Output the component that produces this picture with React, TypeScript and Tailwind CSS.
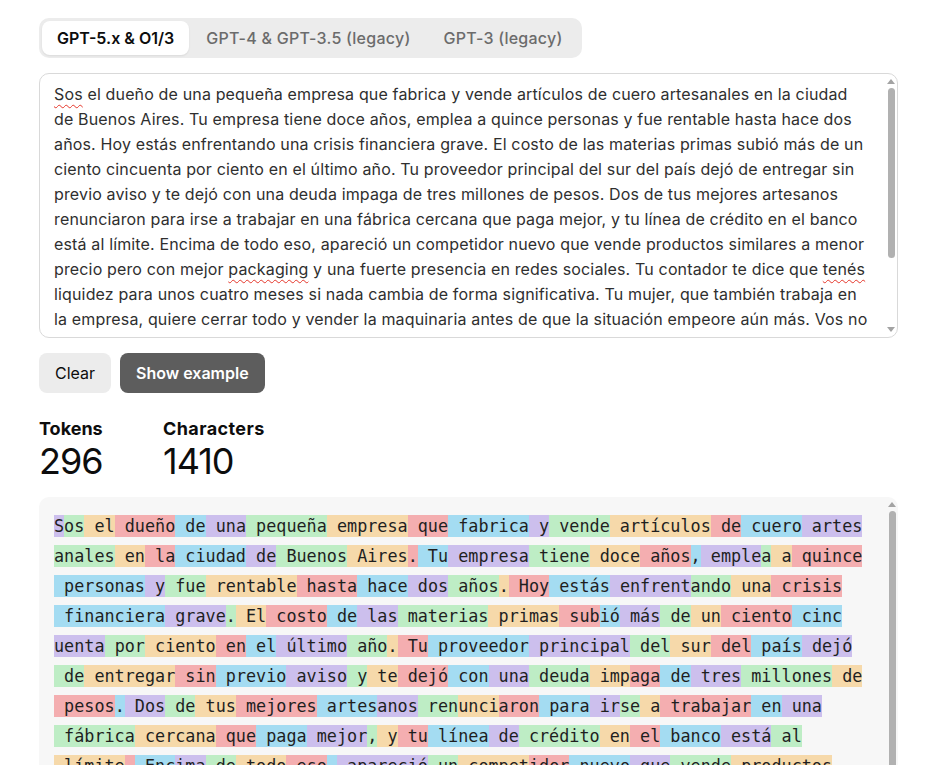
import React from 'react';

// cycle used for token highlights
const TOKEN_COLORS = [
  'bg-[rgba(107,64,216,0.3)]',
  'bg-[rgba(104,222,122,0.4)]',
  'bg-[rgba(244,172,54,0.4)]',
  'bg-[rgba(239,65,70,0.4)]',
  'bg-[rgba(39,181,234,0.4)]',
];

const TOKEN_ROWS: string[][] = [
  ['S', 'os', ' el', ' dueño', ' de', ' una', ' pequeña', ' empresa', ' que', ' fabrica', ' y', ' vende', ' artículos', ' de', ' cuero', ' artes'],
  ['anales', ' en', ' la', ' ciudad', ' de', ' Buenos', ' Aires', '.', ' Tu', ' empresa', ' tiene', ' doce', ' años', ',', ' emple', 'a', ' a', ' quince'],
  [' personas', ' y', ' fue', ' rentable', ' hasta', ' hace', ' dos', ' años', '.', ' Hoy', ' estás', ' enfrent', 'ando', ' una', ' crisis'],
  [' financiera', ' grave', '.', ' El', ' costo', ' de', ' las', ' materias', ' primas', ' sub', 'ió', ' más', ' de', ' un', ' ciento', ' cinc'],
  ['uenta', ' por', ' ciento', ' en', ' el', ' último', ' año', '.', ' Tu', ' proveedor', ' principal', ' del', ' sur', ' del', ' país', ' dejó'],
  [' de', ' entregar', ' sin', ' previo', ' aviso', ' y', ' te', ' dejó', ' con', ' una', ' deuda', ' imp', 'aga', ' de', ' tres', ' millones', ' de'],
  [' pesos', '.', ' Dos', ' de', ' tus', ' mejores', ' artes', 'anos', ' ren', 'unci', 'aron', ' para', ' ir', 'se', ' a', ' trabajar', ' en', ' una'],
  [' fábrica', ' cercana', ' que', ' paga', ' mejor', ',', ' y', ' tu', ' línea', ' de', ' crédito', ' en', ' el', ' banco', ' está', ' al'],
  [' límite', '.', ' Enc', 'ima', ' de', ' todo', ' eso', ',', ' apareció', ' un', ' compet', 'idor', ' nuevo', ' que', ' vende', ' productos'],
  [' similares', ' a', ' menor', ' precio', ' pero', ' con', ' mejor', ' pack', 'aging', ' y', ' una', ' fuerte', ' presencia', ' en', ' redes'],
];

const Squiggle: React.FC<{ children: React.ReactNode }> = ({ children }) => (
  <span className="underline decoration-wavy decoration-[#e5372b] decoration-1 underline-offset-[4px]">{children}</span>
);

const PROMPT_LINES: React.ReactNode[] = [
  <><Squiggle>Sos</Squiggle> el dueño de una pequeña empresa que fabrica y vende artículos de cuero artesanales en la ciudad</>,
  'de Buenos Aires. Tu empresa tiene doce años, emplea a quince personas y fue rentable hasta hace dos',
  'años. Hoy estás enfrentando una crisis financiera grave. El costo de las materias primas subió más de un',
  'ciento cincuenta por ciento en el último año. Tu proveedor principal del sur del país dejó de entregar sin',
  'previo aviso y te dejó con una deuda impaga de tres millones de pesos. Dos de tus mejores artesanos',
  'renunciaron para irse a trabajar en una fábrica cercana que paga mejor, y tu línea de crédito en el banco',
  'está al límite. Encima de todo eso, apareció un competidor nuevo que vende productos similares a menor',
  <>precio pero con mejor <Squiggle>packaging</Squiggle> y una fuerte presencia en redes sociales. Tu contador te dice que <Squiggle>tenés</Squiggle></>,
  'liquidez para unos cuatro meses si nada cambia de forma significativa. Tu mujer, que también trabaja en',
  'la empresa, quiere cerrar todo y vender la maquinaria antes de que la situación empeore aún más. Vos no',
];

const Arrow: React.FC<{ down?: boolean }> = ({ down }) => (
  <svg width="8" height="5" viewBox="0 0 8 5" className="flex-none">
    <polygon points={down ? '0,0 8,0 4,5' : '4,0 8,5 0,5'} fill="#a3a3a3" />
  </svg>
);

const ScrollTrack: React.FC<{ thumb: string; showDown?: boolean }> = ({ thumb, showDown = true }) => (
  <div className="flex w-[12px] flex-none flex-col items-center pt-[5px] pb-[5px]">
    <Arrow />
    <div className={`mt-[4px] w-[7px] flex-none rounded-full bg-[#b1b1b1] ${thumb}`} />
    <div className="flex-1" />
    {showDown && <Arrow down />}
  </div>
);

const TABS = ['GPT-5.x & O1/3', 'GPT-4 & GPT-3.5 (legacy)', 'GPT-3 (legacy)'];

export default function App() {
  let tokenIndex = 0;

  return (
    <div className="min-h-screen bg-white font-['Inter',sans-serif] text-[#0d0d0d]">
      <div className="ml-[39px] w-[859px] pt-[18px]">
        {/* model selector */}
        <div className="inline-flex rounded-[10px] bg-[#ececec] p-[3px]">
          {TABS.map((tab, i) => (
            <div
              key={tab}
              className={
                i === 0
                  ? 'h-[34px] rounded-[8px] bg-white px-[15px] text-[16px] leading-[34px] font-semibold text-[#0d0d0d] shadow-[0_1px_2px_rgba(0,0,0,0.08)]'
                  : 'h-[34px] pl-[17px] pr-[16px] text-[16px] leading-[34px] font-medium tracking-[0.25px] text-[#6b6b6b]'
              }
            >
              {tab}
            </div>
          ))}
        </div>

        {/* prompt box */}
        <div className="mt-[15px] flex h-[265px] overflow-hidden rounded-[10px] border border-[#d9d9d9] bg-white">
          <div className="flex-1 overflow-hidden pl-[14px] pt-[8px] text-[16px] leading-[25px] tracking-[0.15px] text-[#2f2f2f]">
            {PROMPT_LINES.map((line, i) => (
              <div key={i} className="whitespace-nowrap">{line}</div>
            ))}
          </div>
          <ScrollTrack thumb="h-[170px]" />
        </div>

        {/* actions */}
        <div className="mt-[15px] flex gap-[9px]">
          <button className="h-[40px] rounded-[8px] bg-[#ececec] px-[16px] text-[16px] text-[#0d0d0d]">Clear</button>
          <button className="h-[40px] rounded-[8px] bg-[#5d5d5d] px-[16px] text-[16px] font-semibold text-white">Show example</button>
        </div>

        {/* counts */}
        <div className="mt-[24px] flex">
          <div className="w-[124px]">
            <div className="text-[18px] leading-[24px] font-bold">Tokens</div>
            <div className="text-[36px] leading-[40px] tracking-[-1px] text-[#0d0d0d]">296</div>
          </div>
          <div>
            <div className="text-[18px] leading-[24px] font-bold tracking-[0.4px]">Characters</div>
            <div className="text-[36px] leading-[40px] tracking-[-1px] text-[#0d0d0d]">1410</div>
          </div>
        </div>

        {/* tokenized output */}
        <div className="mt-[16px] flex h-[330px] overflow-hidden rounded-[10px] bg-[#f7f7f7]">
          <div className="flex-1 overflow-hidden pl-[15px] pt-[14px] font-['DejaVu_Sans_Mono',monospace] text-[16.8px] text-[#1f1f1f]">
            {TOKEN_ROWS.map((row, r) => (
              <div key={r} className="flex h-[30px] items-center">
                {row.map((tok) => {
                  const color = TOKEN_COLORS[tokenIndex % TOKEN_COLORS.length];
                  tokenIndex += 1;
                  return (
                    <span key={tokenIndex} className={`h-[22px] whitespace-pre leading-[22px] ${color}`}>
                      {tok}
                    </span>
                  );
                })}
              </div>
            ))}
          </div>
          <ScrollTrack thumb="h-[400px]" showDown={false} />
        </div>
      </div>
    </div>
  );
}
